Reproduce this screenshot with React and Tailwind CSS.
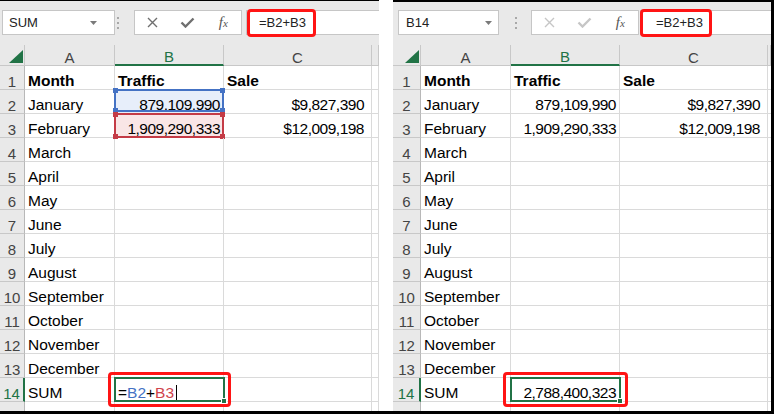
import { Fragment } from "react";

const months = ["March", "April", "May", "June", "July", "August", "September", "October", "November", "December"];

const V = {
  left: {
    panel: "w-[379px] border-t border-black",
    bar: "h-[44px] pt-[9px]",
    cols: "grid-cols-[25px_90px_109px_148px_7px]",
    nameBox: "ml-[2px] w-[113px] pl-[6px] pr-[17px]",
    name: "SUM",
    dots: "w-[19px] pl-[2px]",
    btn: "text-[#6f6f6f]",
    input: "ml-[4px] pl-[12px]",
    mark: "left-0 w-[69px]",
  },
  right: {
    panel: "w-[381px] border-t-2 border-r-[3px] border-black",
    bar: "h-[43px] pt-[8px]",
    cols: "grid-cols-[28px_90px_109px_148px_3px]",
    nameBox: "ml-[5px] w-[101px] pl-[7px] pr-[6px]",
    name: "B14",
    dots: "w-[32px] pl-[16px]",
    btn: "text-[#c6c6c6]",
    input: "ml-[1px] pl-[15px]",
    mark: "-left-[1px] w-[72px]",
  },
};

function Dots() {
  return (
    <div className="flex flex-col gap-[3px]">
      <span className="block w-[2px] h-[2px] bg-[#a8a8a8]" />
      <span className="block w-[2px] h-[2px] bg-[#a8a8a8]" />
      <span className="block w-[2px] h-[2px] bg-[#a8a8a8]" />
    </div>
  );
}

function FormulaBar({ v }) {
  return (
    <div className={`${v.bar} shrink-0 bg-[#e9e9e9] flex items-start text-[13px] text-[#222]`}>
      <div className={`${v.nameBox} h-[25px] bg-white border border-[#c6c6c6] flex items-center justify-between`}>
        <span>{v.name}</span>
        <svg width="7" height="4" viewBox="0 0 7 4">
          <path d="M0 0H7L3.5 4Z" fill="#7a7a7a" />
        </svg>
      </div>
      <div className={`${v.dots} h-[25px] flex items-center`}>
        <Dots />
      </div>
      <div className={`w-[108px] h-[25px] bg-white border border-[#c6c6c6] flex items-center ${v.btn}`}>
        <div className="flex-1 flex justify-center">
          <svg width="11" height="11" viewBox="0 0 11 11">
            <path d="M1 1L10 10M10 1L1 10" stroke="currentColor" strokeWidth="1.4" />
          </svg>
        </div>
        <div className="flex-1 flex justify-center">
          <svg width="15" height="11" viewBox="0 0 15 11">
            <path d="M1.5 5.5L5.5 9.5L13.5 1.5" stroke="currentColor" strokeWidth="2.4" fill="none" />
          </svg>
        </div>
        <div className="flex-1 flex justify-center font-['Liberation_Serif',serif] italic text-[#555] text-[15px] leading-none">
          f<span className="text-[11px] mt-[3px]">x</span>
        </div>
      </div>
      <div className={`${v.input} relative flex-1 h-[25px] bg-white border border-r-0 border-[#c6c6c6] flex items-center text-[13px]`}>
        =B2+B3
        <div className={`absolute -top-[2px] -bottom-[3px] ${v.mark} border-[3px] border-[#ff1414] rounded-[4px]`} />
      </div>
    </div>
  );
}

const cell = "h-[24px] border-r border-b border-[#dadada] flex items-end px-[3px] text-[15.5px] leading-[17px] whitespace-nowrap";
const num = "justify-end tracking-[-0.5px]";
const head = "bg-[#e9e9e9] border-r border-b border-[#c8c8c8] flex items-end justify-center text-[15px] leading-[14px] text-[#444]";

function Handles({ color }) {
  return (
    <>
      <span className={`absolute -left-[3px] -top-[3px] w-[5px] h-[5px] ${color}`} />
      <span className={`absolute -right-[3px] -top-[3px] w-[5px] h-[5px] ${color}`} />
      <span className={`absolute -left-[3px] -bottom-[3px] w-[5px] h-[5px] ${color}`} />
      <span className={`absolute -right-[3px] -bottom-[3px] w-[5px] h-[5px] ${color}`} />
    </>
  );
}

function Sheet({ side }) {
  const v = V[side];
  const edit = side === "left";
  const rows = [
    ["Month", "Traffic", "Sale"],
    ["January", "879,109,990", "$9,827,390"],
    ["February", "1,909,290,333", "$12,009,198"],
    ...months.map((m) => [m, "", ""]),
  ];
  return (
    <div className={`${v.panel} h-[411px] overflow-hidden flex flex-col`}>
      <FormulaBar v={v} />
      <div className={`grid shrink-0 ${v.cols}`}>
        <div className={`${head} h-[21px] justify-end items-end pr-[1px] pb-[2px]`}>
          <svg width="14" height="13" viewBox="0 0 14 13">
            <path d="M14 0V13H0Z" fill="#217346" />
          </svg>
        </div>
        <div className={`${head} h-[21px]`}>A</div>
        <div className={`${head} h-[21px] bg-[#d4d4d4] border-b-2 border-b-[#217346] text-[#217346]`}>B</div>
        <div className={`${head} h-[21px]`}>C</div>
        <div className={`${head} h-[21px]`} />

        {rows.map((r, i) => (
          <Fragment key={i}>
            <div className={`${head} h-[24px] border-r-[#b8b8b8]`}>{i + 1}</div>
            <div className={`${cell} ${i === 0 ? "font-bold" : ""}`}>{r[0]}</div>
            <div
              className={`${cell} relative ${i === 0 ? "font-bold" : `${num} pr-[3px]`} ${
                edit && i === 1 ? "bg-[#e7eefa]" : ""
              } ${edit && i === 2 ? "bg-[#f9e6e6]" : ""}`}
            >
              {r[1]}
              {edit && i === 1 && (
                <div className="absolute -left-[1px] -top-[1px] -right-[1px] bottom-[1px] border-2 border-[#4472c4]">
                  <Handles color="bg-[#4472c4]" />
                </div>
              )}
              {edit && i === 2 && (
                <div className="absolute -left-[1px] -top-[1px] -right-[1px] -bottom-[1px] border-2 border-[#c43b46]">
                  <Handles color="bg-[#c43b46]" />
                </div>
              )}
            </div>
            <div className={`${cell} ${i === 0 ? "font-bold" : `${num} pr-[7px]`}`}>{r[2]}</div>
            <div className={cell} />
          </Fragment>
        ))}

        <div className={`${head} h-[24px] bg-[#d4d4d4] text-[#217346] border-r-2 border-r-[#217346]`}>14</div>
        <div className={cell}>SUM</div>
        <div className={`${cell} relative ${edit ? "" : `${num} pr-[3px]`}`}>
          {edit ? (
            <>
              <span>=</span>
              <span className="text-[#4472c4]">B2</span>
              <span>+</span>
              <span className="text-[#d0434b]">B3</span>
              <span className="inline-block w-[1px] h-[17px] bg-black ml-[2px] mb-[-1px]" />
            </>
          ) : (
            "2,788,400,323"
          )}
          <div className="absolute -left-[1px] -top-[1px] -right-[2px] -bottom-[1px] border-2 border-[#217346]">
            <span className="absolute -right-[4px] -bottom-[4px] w-[6px] h-[6px] bg-[#217346] border border-white" />
          </div>
          <div
            className={`absolute -top-[6px] -bottom-[6px] ${
              edit ? "-left-[7px] -right-[8px]" : "-left-[8px] -right-[9px]"
            } border-[3px] border-[#ff1414] rounded-[4px]`}
          />
        </div>
        <div className={cell} />
        <div className={cell} />

        <div className={`${head} h-[24px] border-r-[#b8b8b8]`}>15</div>
        <div className={cell} />
        <div className={cell} />
        <div className={cell} />
        <div className={cell} />
      </div>
    </div>
  );
}

export default function App() {
  return (
    <div className="w-[774px] h-[414px] bg-white flex flex-col overflow-hidden font-['Liberation_Sans',Arial,sans-serif] text-black">
      <div className="flex">
        <Sheet side="left" />
        <div className="w-[14px]" />
        <Sheet side="right" />
      </div>
      <div className="h-[3px] bg-black" />
    </div>
  );
}
